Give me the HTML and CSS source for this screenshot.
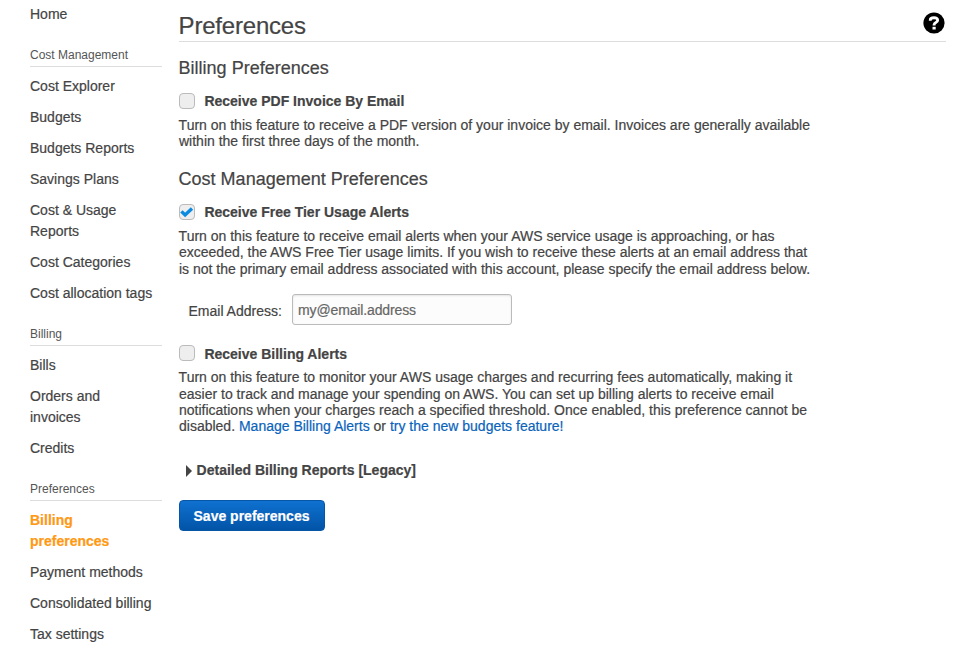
FILE: index.html
```html
<!DOCTYPE html>
<html lang="en">
<head>
<meta charset="utf-8">
<title>Preferences</title>
<link rel="stylesheet" href="styles.css">
</head>
<body>
<div class="layout">
  <nav class="sidebar">
    <ul class="nav-list">
      <li>Home</li>
    </ul>
    <h3 class="nav-heading">Cost Management</h3>
    <ul class="nav-list">
      <li>Cost Explorer</li>
      <li>Budgets</li>
      <li>Budgets Reports</li>
      <li>Savings Plans</li>
      <li>Cost &amp; Usage<br>Reports</li>
      <li>Cost Categories</li>
      <li>Cost allocation tags</li>
    </ul>
    <h3 class="nav-heading">Billing</h3>
    <ul class="nav-list">
      <li>Bills</li>
      <li>Orders and<br>invoices</li>
      <li>Credits</li>
    </ul>
    <h3 class="nav-heading">Preferences</h3>
    <ul class="nav-list">
      <li class="active">Billing<br>preferences</li>
      <li>Payment methods</li>
      <li>Consolidated billing</li>
      <li>Tax settings</li>
    </ul>
  </nav>
  <main class="content">
    <header class="page-header">
      <h1>Preferences</h1>
      <svg class="help" viewBox="0 0 22 22" role="img" aria-label="Help">
        <circle cx="11" cy="11" r="10.6" fill="#000"/>
        <path d="M7.3 8.8V8Q7.3 5.7 11 5.7T14.6 8.2Q14.6 9.7 12.9 10.5T11.1 12.8V13.5" fill="none" stroke="#fff" stroke-width="2.9"/>
        <rect x="9.5" y="14.8" width="3.2" height="2.7" fill="#fff"/>
      </svg>
    </header>

    <section>
      <h2>Billing Preferences</h2>
      <div class="option"><span class="checkbox"></span><strong>Receive PDF Invoice By Email</strong></div>
      <p>Turn on this feature to receive a PDF version of your invoice by email. Invoices are generally available<br>within the first three days of the month.</p>
    </section>

    <section class="cost-section">
      <h2>Cost Management Preferences</h2>
      <div class="option">
        <span class="checkbox"><svg viewBox="0 0 14 14"><path d="M1.4 6.4L5.1 10L12 3.6" fill="none" stroke="#0b8be0" stroke-width="3.4"/></svg></span>
        <strong>Receive Free Tier Usage Alerts</strong>
      </div>
      <p>Turn on this feature to receive email alerts when your AWS service usage is approaching, or has<br>exceeded, the AWS Free Tier usage limits. If you wish to receive these alerts at an email address that<br>is not the primary email address associated with this account, please specify the email address below.</p>
      <div class="email-row">
        <label for="email">Email Address:</label>
        <input id="email" type="text" value="my@email.address">
      </div>
      <div class="option"><span class="checkbox"></span><strong>Receive Billing Alerts</strong></div>
      <p class="alerts-text">Turn on this feature to monitor your AWS usage charges and recurring fees automatically, making it<br>easier to track and manage your spending on AWS. You can set up billing alerts to receive email<br>notifications when your charges reach a specified threshold. Once enabled, this preference cannot be<br>disabled. <a>Manage Billing Alerts</a> or <a>try the new budgets feature!</a></p>
    </section>

    <div class="disclosure"><svg viewBox="0 0 6 12"><path d="M0 0L6 6L0 12Z" fill="#444"/></svg><strong>Detailed Billing Reports [Legacy]</strong></div>
    <button class="save" type="button">Save preferences</button>
  </main>
</div>
</body>
</html>
```
FILE: styles.css
```css
* {
  box-sizing: border-box;
}

body {
  margin: 0;
  height: 651px;
  overflow: hidden;
  background: #fff;
  color: #444;
  font: 14px/21px "Liberation Sans", Arial, sans-serif;
  -webkit-text-stroke: 0.2px;
}

h1, h2, h3, p, ul {
  margin: 0;
  padding: 0;
  font-weight: normal;
}

.layout {
  display: grid;
  grid-template-columns: 132px 767px;
  column-gap: 17px;
  padding-left: 30px;
}

.sidebar {
  padding-top: 4px;
  white-space: nowrap;
}

.nav-list {
  display: flex;
  flex-direction: column;
  gap: 10px;
  list-style: none;
}

.active {
  color: #ff9914;
  font-weight: bold;
}

.nav-heading {
  height: 23px;
  margin: 19px 0 9px;
  border-bottom: 1px solid #ddd;
  color: #555;
  font-size: 12px;
  line-height: 22px;
  -webkit-text-stroke: 0;
}

.content {
  white-space: nowrap;
}

.page-header {
  display: flex;
  justify-content: space-between;
  height: 42px;
  padding-top: 12px;
  border-bottom: 1px solid #ddd;
}

h1 {
  font-size: 24px;
  line-height: 28px;
  letter-spacing: -0.2px;
}

.help {
  width: 22px;
  height: 22px;
  margin-right: 1px;
}

h2 {
  padding-top: 14px;
  font-size: 18px;
  line-height: 24px;
}

h1, h2, p {
  text-indent: -0.4px;
}

.option {
  display: flex;
  align-items: center;
  gap: 9.4px;
  height: 16px;
  margin: 13px 0 8px;
}

.checkbox {
  width: 16px;
  height: 16px;
  border: 1px solid #bbb;
  border-radius: 4px;
  background: #eee;
}

.checkbox svg {
  display: block;
  width: 14px;
  height: 14px;
}

p {
  line-height: 16.4px;
}

.cost-section {
  padding-top: 3.2px;
}

.email-row {
  display: flex;
  align-items: center;
  height: 31px;
  margin: 16.8px 0 20px;
  padding-left: 9.5px;
}

.email-row label {
  width: 103.5px;
  padding-top: 3px;
}

.email-row input {
  width: 220px;
  height: 31px;
  padding: 0 6px 0 5px;
  border: 1px solid #bbb;
  border-radius: 3px;
  background: #fcfcfc;
  box-shadow: inset 0 1px 2px #e4e4e4;
  color: #666;
  font: inherit;
  letter-spacing: -0.13px;
}

.email-row + .option strong {
  padding-top: 2px;
}

.alerts-text {
  padding-top: 0.2px;
}

a {
  color: #0a63bb;
}

.disclosure {
  display: flex;
  align-items: center;
  gap: 4.6px;
  height: 21px;
  margin-top: 25.2px;
  padding-left: 7px;
}

.disclosure svg {
  width: 6px;
  height: 12px;
  margin-top: 1px;
}

.save {
  display: block;
  width: 146px;
  height: 31px;
  margin-top: 19px;
  padding: 1px 1px 0 0;
  border: 1px solid #0755a5;
  border-radius: 4px;
  background: linear-gradient(#0f71d0, #0254a7);
  color: #fff;
  font: bold 14px/28px "Liberation Sans", Arial, sans-serif;
}
```
